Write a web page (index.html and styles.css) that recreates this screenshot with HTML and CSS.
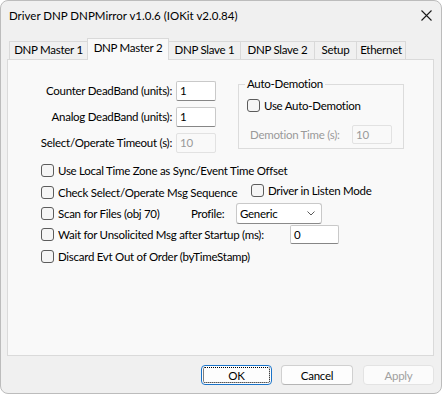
FILE: index.html
```html
<!DOCTYPE html>
<html lang="en">
<head>
    <meta charset="UTF-8">
    <title>Driver DNP DNPMirror</title>
    <link rel="stylesheet" href="styles.css">
</head>
<body>
    <div class="window">
        <div class="titlebar">
            <span class="title">Driver DNP DNPMirror v1.0.6 (IOKit v2.0.84)</span>
            <svg class="close" width="11" height="11" viewBox="0 0 11 11">
                <path d="M0.5 0.5 L10.5 10.5 M10.5 0.5 L0.5 10.5" stroke="#1a1a1a" stroke-width="1.1" fill="none"/>
            </svg>
        </div>
        <div class="content">
            <div class="tabs">
                <div class="tab t-m1">DNP Master 1</div>
                <div class="tab t-m2 active">DNP Master 2</div>
                <div class="tab t-s1">DNP Slave 1</div>
                <div class="tab t-s2">DNP Slave 2</div>
                <div class="tab t-setup">Setup</div>
                <div class="tab t-eth">Ethernet</div>
            </div>
            <div class="panel">
                <div class="top">
                    <div class="fields">
                        <label class="field-label">Counter DeadBand (units):</label>
                        <div class="edit">1</div>
                        <label class="field-label">Analog DeadBand (units):</label>
                        <div class="edit">1</div>
                        <label class="field-label">Select/Operate Timeout (s):</label>
                        <div class="edit disabled">10</div>
                    </div>
                    <fieldset class="group">
                        <legend>Auto-Demotion</legend>
                        <div class="check group-check"><span class="box"></span>Use Auto-Demotion</div>
                        <div class="demotion">
                            <span class="muted">Demotion Time (s):</span>
                            <div class="edit disabled small">10</div>
                        </div>
                    </fieldset>
                </div>
                <div class="options">
                    <div class="row">
                        <div class="check"><span class="box"></span>Use Local Time Zone as Sync/Event Time Offset</div>
                    </div>
                    <div class="row">
                        <div class="check w-seq"><span class="box"></span>Check Select/Operate Msg Sequence</div>
                        <div class="check listen"><span class="box"></span>Driver in Listen Mode</div>
                    </div>
                    <div class="row">
                        <div class="check w-scan"><span class="box"></span>Scan for Files (obj 70)</div>
                        <span class="profile-label">Profile:</span>
                        <div class="combo">
                            <span>Generic</span>
                            <svg width="8" height="5" viewBox="0 0 8 5">
                                <polyline points="0.5,0.5 4,4 7.5,0.5" stroke="#5a5a5a" stroke-width="1" fill="none"/>
                            </svg>
                        </div>
                    </div>
                    <div class="row">
                        <div class="check w-wait"><span class="box"></span>Wait for Unsolicited Msg after Startup (ms):</div>
                        <div class="edit wide">0</div>
                    </div>
                    <div class="row">
                        <div class="check"><span class="box"></span>Discard Evt Out of Order (byTimeStamp)</div>
                    </div>
                </div>
            </div>
            <div class="buttons">
                <button class="btn default">OK</button>
                <button class="btn cancel">Cancel</button>
                <button class="btn" disabled>Apply</button>
            </div>
        </div>
    </div>
</body>
</html>
```

FILE: styles.css
```css
body {
    margin: 0;
    background: #ffffff;
    font-family: Lato, "Noto Sans", sans-serif;
    font-size: 11.5px;
    letter-spacing: -0.27px;
    color: #000;
}
.window {
    width: 442px;
    height: 394px;
    box-sizing: border-box;
    border: 1px solid #bcbcbc;
    border-radius: 8px;
    background: #f0f0f0;
    overflow: hidden;
}
.titlebar {
    height: 29px;
    display: flex;
    align-items: center;
    justify-content: space-between;
    padding: 0 9px 0 8px;
}
.title {
    letter-spacing: 0;
}
.content {
    padding: 0 7px 0 6px;
}

/* tabs */
.tabs {
    display: flex;
    align-items: flex-end;
    height: 21px;
    margin-top: 8px;
    padding-left: 2px;
}
.tab {
    box-sizing: border-box;
    height: 18px;
    line-height: 16px;
    text-align: center;
    border: 1px solid #d9d9d9;
    border-bottom: none;
    margin-left: -1px;
    background: #f0f0f0;
    white-space: nowrap;
}
.tab.active {
    height: 22px;
    line-height: 18px;
    margin-bottom: -1px;
    background: #f9f9f9;
    position: relative;
    z-index: 1;
}
.t-m1 { width: 79px; margin-left: 0; }
.t-m2 { width: 82px; }
.t-s1 { width: 73px; }
.t-s2 { width: 75px; }
.t-setup { width: 43px; }
.t-eth { width: 50px; }

.panel {
    height: 297px;
    box-sizing: border-box;
    border: 1px solid #dadada;
    background: #f9f9f9;
}

/* top part */
.top {
    display: flex;
    align-items: flex-start;
    padding-top: 16px;
}
.fields {
    display: grid;
    grid-template-columns: 164px 40px;
    grid-auto-rows: 20px;
    column-gap: 4px;
    row-gap: 6px;
    margin-top: 5px;
}
.field-label {
    text-align: right;
    line-height: 20px;
    white-space: nowrap;
}
.edit {
    box-sizing: border-box;
    height: 20px;
    line-height: 18px;
    padding-left: 3px;
    background: #fff;
    border: 1px solid #c9c9c9;
    border-bottom-color: #868686;
    border-radius: 2px;
}
.edit.disabled {
    background: #f9f9f9;
    border-color: #e2e2e2;
    color: #9a9a9a;
}
.edit.small {
    width: 40px;
    height: 19px;
    line-height: 17px;
}
.edit.wide {
    width: 49px;
    height: 19px;
    line-height: 17px;
}
.group {
    box-sizing: border-box;
    width: 166px;
    margin: 0 0 0 22px;
    padding: 0 8px 4px;
    border: 1px solid #dcdcdc;
}
.group legend {
    padding: 0 2px;
    margin-left: -2px;
    line-height: 16px;
}
.group-check {
    margin-top: 5px;
    height: 16px;
}
.demotion {
    display: flex;
    align-items: center;
    justify-content: space-between;
    height: 19px;
    margin-top: 12px;
    padding: 0 3px;
    white-space: nowrap;
}
.muted {
    color: #9a9a9a;
}

/* checkboxes */
.check {
    display: flex;
    align-items: center;
    white-space: nowrap;
}
.box {
    box-sizing: border-box;
    width: 13px;
    height: 13px;
    margin-right: 4px;
    border: 1px solid #5c5c5c;
    border-radius: 3px;
    background: #f5f5f5;
    flex: none;
}
.options {
    display: grid;
    grid-auto-rows: 21.4px;
    margin-top: 7px;
    padding-left: 33px;
}
.row {
    display: flex;
    align-items: center;
}
.w-seq { width: 210px; }
.w-scan { width: 150px; }
.w-wait { width: 249px; }
.listen { margin-bottom: 4px; }
.profile-label { width: 45px; }
.combo {
    box-sizing: border-box;
    width: 86px;
    height: 21px;
    display: flex;
    align-items: center;
    justify-content: space-between;
    padding: 0 6px 0 3px;
    background: #fff;
    border: 1px solid #c9c9c9;
    border-bottom-color: #8a8a8a;
    border-radius: 3px;
}

/* dialog buttons */
.buttons {
    display: flex;
    justify-content: flex-end;
    margin-top: 9px;
}
.btn {
    box-sizing: border-box;
    width: 71px;
    height: 20px;
    margin-left: 9px;
    padding: 0;
    font-family: inherit;
    font-size: 11.5px;
    letter-spacing: -0.27px;
    color: #000;
    background: #fdfdfd;
    border: 1px solid #d0d0d0;
    border-bottom-color: #b5b5b5;
    border-radius: 4px;
}
.btn.default {
    border-color: #1a73c8;
    outline: 1px dotted #000;
    outline-offset: -3px;
}
.btn.cancel {
    width: 72px;
    margin-right: 1px;
}
.btn:disabled {
    color: #a0a0a0;
    background: #fbfbfb;
    border-color: #e3e3e3;
}
```
